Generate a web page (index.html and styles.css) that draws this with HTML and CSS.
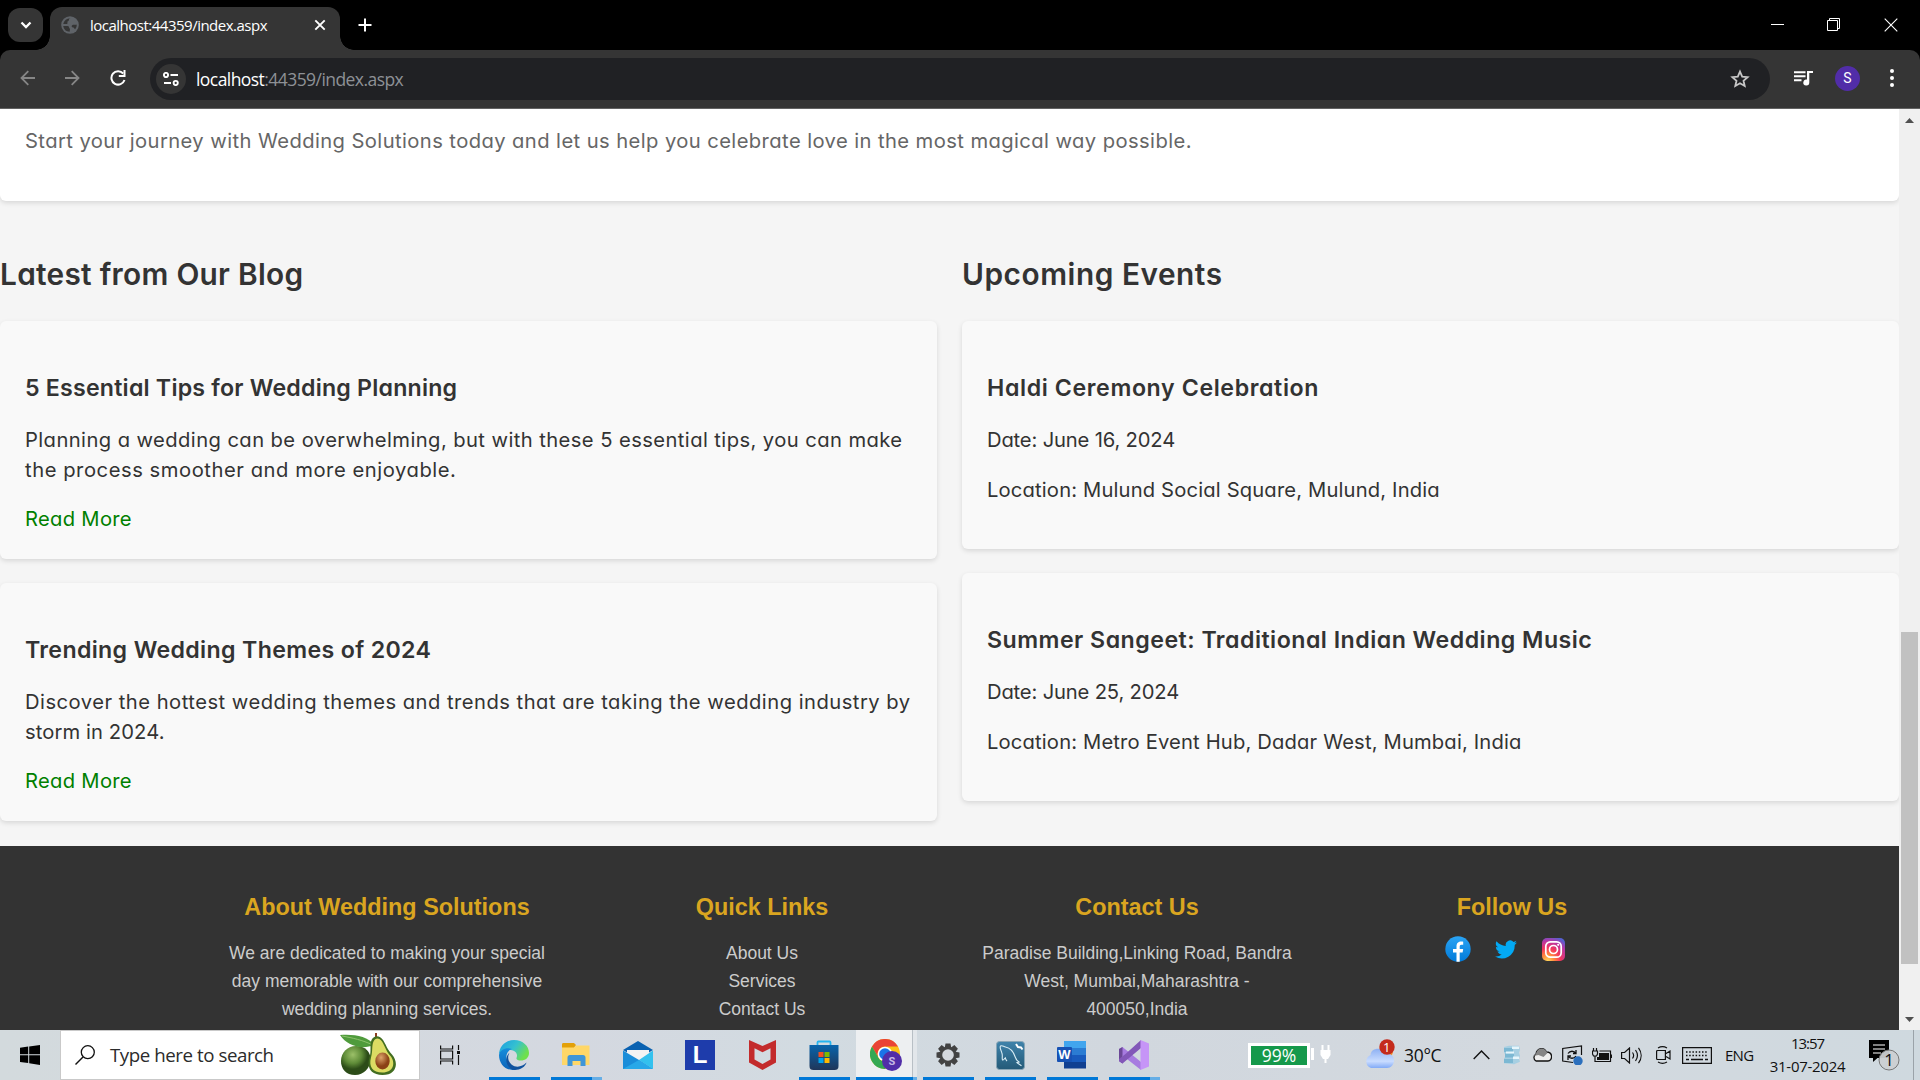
FILE: index.html
```html
<!DOCTYPE html>
<html lang="en">
<head>
<meta charset="utf-8">
<title>localhost:44359/index.aspx</title>
<link rel="stylesheet" href="styles.css">
</head>
<body>
<header class="browser">
  <div class="tabstrip">
    <button class="tab-search"><svg width="12" height="8" viewBox="0 0 12 8"><path d="M1.500 1.500 6 6l4.500-4.500" fill="none" stroke="#fff" stroke-width="2.300"/></svg></button>
    <div class="tab">
      <svg class="globe" width="18" height="18" viewBox="0 0 18 18"><circle cx="9" cy="9" r="8.800" fill="#5f6368"/><path d="M9.500 2.200C7 2.800 8.800 4.500 7 5.200 5.500 5.800 7.500 7.500 5.800 8H2.200a7 7 0 0 1 7.300-5.800zM2.200 10h4.300c1.800 0 1.200 1.500 2 2.200 1 .8.200 1.800.2 3.500A6.700 6.700 0 0 1 2.200 10zM15.800 8.500c-1.300 1-2.800-.5-4.300.5s-.8 2.500.7 2.500 1 1.800 2 1.800a7 7 0 0 0 1.600-4.800z" fill="#353535"/></svg>
      <span class="tab-title">localhost:44359/index.aspx</span>
      <svg width="12" height="12" viewBox="0 0 12 12"><path d="m1.300 1.300 9.400 9.400m0-9.400-9.400 9.400" stroke="#fff" stroke-width="1.900"/></svg>
    </div>
    <svg class="new-tab" width="14" height="14" viewBox="0 0 14 14"><path d="M7 .5v13M.5 7h13" stroke="#fff" stroke-width="2"/></svg>
    <div class="window-buttons">
      <svg width="13" height="14" viewBox="0 0 13 14"><path d="M0 6.500h13" stroke="#fff"/></svg>
      <svg width="13" height="14" viewBox="0 0 13 14"><path d="M.5 2.500h10v10H.5zM2.500 2.500v-2h10v10H11" fill="none" stroke="#fff"/></svg>
      <svg width="14" height="14" viewBox="0 0 14 14"><path d="m.7.700 12.600 12.600m0-12.600L.7 13.300" stroke="#fff" stroke-width="1.100"/></svg>
    </div>
  </div>
  <div class="toolbar">
    <svg width="15" height="16" viewBox="0 0 15 16"><path d="M15 8H1.500M8.300 1.200 1.500 8l6.800 6.800" fill="none" stroke="#868686" stroke-width="1.800"/></svg>
    <svg class="forward" width="15" height="16" viewBox="0 0 15 16"><path d="M0 8h13.500M6.700 1.200 13.500 8l-6.800 6.800" fill="none" stroke="#868686" stroke-width="1.800"/></svg>
    <svg class="reload" width="16" height="16" viewBox="0 0 16 16"><path d="M13.200 3.500A6.700 6.700 0 1 0 14.500 10" fill="none" stroke="#fff" stroke-width="2"/><path d="M15.500 0v7H8.800V5h4.700V0z" fill="#fff"/></svg>
    <div class="omnibox">
      <span class="site-info"><svg width="16" height="14" viewBox="0 0 16 14"><g fill="none" stroke="#fff" stroke-width="1.900"><circle cx="3" cy="3" r="2.100"/><path d="M7.500 3H15M1 11h7"/><circle cx="12.700" cy="11" r="2.100"/></g></svg></span>
      <span class="url"><b>localhost</b>:44359/index.aspx</span>
      <svg class="star" width="20" height="19" viewBox="0 0 20 19"><path d="m10 2.600 2.200 5 5.400.5-4.100 3.600 1.200 5.300-4.700-2.800L5.300 17l1.200-5.300-4.100-3.600 5.400-.5z" fill="none" stroke="#c7c7c7" stroke-width="1.800"/></svg>
    </div>
    <svg class="media" width="19" height="15" viewBox="0 0 19 15"><path d="M0 1.200h11.500M0 5.200h11.500M0 9.200h7.500" stroke="#fff" stroke-width="2"/><path d="M13 0h6v2h-3.700v9.500A3 3 0 1 1 13 8.600z" fill="#fff"/></svg>
    <span class="avatar">S</span>
    <svg class="menu" width="4" height="18" viewBox="0 0 4 18"><g fill="#fff"><circle cx="2" cy="2" r="2"/><circle cx="2" cy="9" r="2"/><circle cx="2" cy="16" r="2"/></g></svg>
  </div>
</header>

<div class="viewport">
  <main class="page">
    <section class="intro"><p>Start your journey with Wedding Solutions today and let us help you celebrate love in the most magical way possible.</p></section>
    <div class="columns">
      <section class="column">
        <h2 class="blog-heading">Latest from Our Blog</h2>
        <article class="card post">
          <h3 class="title-tips">5 Essential Tips for Wedding Planning</h3>
          <p class="wide">Planning a wedding can be overwhelming, but with these 5 essential tips, you can make<br><span class="wider">the process smoother and more enjoyable.</span></p>
          <a>Read More</a>
        </article>
        <article class="card post">
          <h3 class="title-themes">Trending Wedding Themes of 2024</h3>
          <p class="trend">Discover the hottest wedding themes and trends that are taking the wedding industry by<br><span class="narrow">storm in 2024.</span></p>
          <a>Read More</a>
        </article>
      </section>
      <section class="column">
        <h2 class="events-heading">Upcoming Events</h2>
        <article class="card">
          <h3 class="title-haldi">Haldi Ceremony Celebration</h3>
          <p class="date">Date: June 16, 2024</p>
          <p class="place">Location: Mulund Social Square, Mulund, India</p>
        </article>
        <article class="card">
          <h3 class="title-summer">Summer Sangeet: Traditional Indian Wedding Music</h3>
          <p class="date">Date: June 25, 2024</p>
          <p class="place">Location: Metro Event Hub, Dadar West, Mumbai, India</p>
        </article>
      </section>
    </div>
    <footer class="footer">
      <div><h4>About Wedding Solutions</h4><p>We are dedicated to making your special<br>day memorable with our comprehensive<br>wedding planning services.</p></div>
      <div><h4>Quick Links</h4><p>About Us<br>Services<br>Contact Us</p></div>
      <div><h4>Contact Us</h4><p>Paradise Building,Linking Road, Bandra<br>West, Mumbai,Maharashtra -<br>400050,India</p></div>
      <div><h4>Follow Us</h4>
        <div class="social">
          <svg width="26" height="26" viewBox="0 0 26 26"><defs><linearGradient id="fb" x2="0" y2="1"><stop stop-color="#2aa4f4"/><stop offset="1" stop-color="#007ad9"/></linearGradient></defs><circle cx="13" cy="13" r="12.700" fill="url(#fb)"/><path d="M11.500 25.700V16.500H8V13h3.500v-2.500c0-3.600 2-5 4.700-5 1 0 2 .2 2 .2v3h-1.700c-1.400 0-1.800.9-1.800 1.800V13h3.500l-.6 3.500h-2.900v9.200z" fill="#fff"/></svg>
          <svg width="22" height="19" viewBox="0 0 24 20"><path d="M24 2.400a10 10 0 0 1-2.800.8A5 5 0 0 0 23.300.5a10 10 0 0 1-3.100 1.200A4.900 4.900 0 0 0 11.800 6.200 14 14 0 0 1 1.700 1.100a4.900 4.900 0 0 0 1.500 6.500A4.900 4.900 0 0 1 1 7a4.900 4.900 0 0 0 3.900 4.900 5 5 0 0 1-2.200.1 4.900 4.900 0 0 0 4.600 3.400A9.900 9.900 0 0 1 0 17.500a14 14 0 0 0 21.500-12.500A10 10 0 0 0 24 2.400z" fill="#03a9f4"/></svg>
          <svg width="23" height="23" viewBox="0 0 23 23"><defs><radialGradient id="ig" cx=".25" cy="1" r="1.100"><stop stop-color="#ffd75a"/><stop offset=".25" stop-color="#ff8a3d"/><stop offset=".5" stop-color="#f5375c"/><stop offset=".8" stop-color="#b637a6"/><stop offset="1" stop-color="#5660d0"/></radialGradient></defs><rect width="23" height="23" rx="5" fill="url(#ig)"/><g fill="none" stroke="#fff" stroke-width="1.700"><rect x="3.800" y="3.800" width="15.400" height="15.400" rx="4.500"/><circle cx="11.500" cy="11.500" r="4"/></g><circle cx="16.200" cy="6.800" r="1.100" fill="#fff"/></svg>
        </div>
      </div>
    </footer>
  </main>
  <div class="scrollbar">
    <svg width="9" height="5" viewBox="0 0 9 5"><path d="M0 5 4.500 0 9 5z" fill="#505050"/></svg>
    <div class="thumb"></div>
    <svg width="9" height="5" viewBox="0 0 9 5"><path d="M0 0 4.500 5 9 0z" fill="#505050"/></svg>
  </div>
</div>

<nav class="taskbar">
  <div class="start"><svg width="20" height="20" viewBox="0 0 20 20"><path d="M0 2.800 8.200 1.600v7.700H0zM9.200 1.500 20 0v9.300H9.200zM0 10.300h8.200V18L0 16.900zM9.200 10.300H20V20L9.200 18.200z"/></svg></div>
  <div class="search">
    <svg width="20" height="20" viewBox="0 0 20 20"><circle cx="12.800" cy="7.200" r="6.500" fill="none" stroke="#111" stroke-width="1.300"/><path d="m8 12-7.500 7.500" stroke="#111" stroke-width="1.400"/></svg>
    <span>Type here to search</span>
    <svg class="avocado" width="58" height="44" viewBox="0 0 58 44"><defs><radialGradient id="av" cx=".4" cy=".3"><stop stop-color="#9cc069"/><stop offset=".6" stop-color="#5f8c38"/><stop offset="1" stop-color="#2c4c18"/></radialGradient><radialGradient id="pit" cx=".4" cy=".3"><stop stop-color="#dda36a"/><stop offset="1" stop-color="#8b4216"/></radialGradient></defs><path d="M16 13c9 0 15 6 14.500 14S24 42 15 42 1 36 1 28s6-15 15-15z" fill="url(#av)"/><path d="M0 2c14-1 28 1 34 10C22 17 7 13 0 2z" fill="#4f9b3c"/><path d="M2 3c11 2 20 4 31 9" stroke="#8dc36c" fill="none"/><path d="M36 0v5" stroke="#8a3d1e" stroke-width="2"/><path d="M31.500 7c3-5.500 8.500-4.500 11.500 0s4 9 9 14.500c7 8 5 20.500-9.500 20.500-12 0-16-8-13-17.500 2-7 0-12 2-17.500z" fill="#426d20"/><path d="M33.500 8.500c2-4.500 6-3.500 8.500 0 3.500 5.500 4 9.500 8.500 14.500 5.500 7 3 16.500-8 16.500-10 0-14-6-11.500-15 2-7 .5-11.500 2.500-16z" fill="#dcdc63"/><ellipse cx="42.500" cy="28" rx="7.200" ry="8.500" fill="url(#pit)"/></svg>
  </div>
  <div class="task-view"><svg width="20" height="20" viewBox="0 0 20 20"><path d="M.6.500v3.500h12V.5M.6 19.500V16h12v3.500M.6 6h12v8H.6zM18.500 0v5M18.500 10v10" fill="none" stroke="#111" stroke-width="1.200"/><path d="M17 6h3v3h-3z" fill="#111"/></svg></div>
  <div class="apps">
    <div class="app running"><svg width="30" height="30" viewBox="0 0 30 30"><defs><linearGradient id="e1" x1="0" x2="1" y2=".5"><stop stop-color="#1b9de2"/><stop offset=".55" stop-color="#35c1d0"/><stop offset="1" stop-color="#6fe04c"/></linearGradient><linearGradient id="e2" x2="0" y2="1"><stop stop-color="#168ddb"/><stop offset="1" stop-color="#0b63b9"/></linearGradient></defs><path d="M0 15C0 6 7 0 15 0c9 0 15 6 15 13 0 5-4 7.500-8 7.500-3 0-5-1-4.500-2.500 1-2 1-6-3.500-7.500C8 8.500 1 11 0 15z" fill="url(#e1)"/><path d="M0 15c1-6 8-8 13-6-4 1-7 6-5 11 2 6 6 8.500 10 9.500C8 32 0 25 0 15z" fill="url(#e2)"/><path d="M10.500 13c-2 3-2 8 2 11.500 5 4 11 2 15-2-1 4-6 7.500-12 7.500-6-1-9-7-8-12 .5-2.500 1.500-4 3-5z" fill="#10529e"/></svg></div>
    <div class="app running extra"><svg width="28" height="24" viewBox="0 0 28 24"><path d="M0 1.500C0 .5.500 0 1.500 0H12l2 2-2 3H0z" fill="#e3a008"/><path d="M0 4.500h12l2-2h13.500V22H0z" fill="#ffd768"/><path d="M5.500 23v-8.500c0-1.500 1-2.500 2.500-2.500h13c1.500 0 2.500 1 2.500 2.500V23h-5v-5h-8v5z" fill="#3f96d8"/></svg></div>
    <div class="app"><svg width="30" height="28" viewBox="0 0 30 28"><path d="M0 9 15 0l15 9-15 9z" fill="#0961b1"/><path d="M4 9h22v6l-11 6L4 15z" fill="#f3f3f3"/><path d="M0 9.500 16 19 30 28H0z" fill="#1a8dd9"/><path d="m16 19 14-9.500V28z" fill="#33c1ee"/><path d="M0 28h30L16 19z" fill="#28a8e8"/></svg></div>
    <div class="app"><span class="lenovo">L</span></div>
    <div class="app"><svg width="27" height="30" viewBox="0 0 27 30"><path d="m0 0 13.500 6L27 0v22.500L13.500 30 0 22.500zm5.500 8.300v11.200l8 4.500 8-4.500V8.300l-8 4z" fill="#c32b2c" fill-rule="evenodd"/></svg></div>
    <div class="app running"><svg width="30" height="30" viewBox="0 0 30 30"><defs><linearGradient id="st" x2="0" y2="1"><stop stop-color="#0864ab"/><stop offset="1" stop-color="#203659"/></linearGradient></defs><path d="M8.500 7V2.500C8.500 2 8.800 1.500 9.500 1.500h11c.7 0 1 .5 1 1V7" fill="none" stroke="#25b4ef" stroke-width="1.800"/><path d="M.500 5h29v21c0 3-1.500 4-4 4h-21c-2.500 0-4-1-4-4z" fill="url(#st)"/><path d="M9.500 12h5v5h-5z" fill="#f25022"/><path d="M15.500 12h5v5h-5z" fill="#7fba00"/><path d="M9.500 18h5v5h-5z" fill="#00a4ef"/><path d="M15.500 18h5v5h-5z" fill="#ffb900"/></svg></div>
    <div class="app running chrome"><svg width="32" height="32" viewBox="0 0 32 32"><circle cx="15" cy="15" r="15" fill="#fbc116"/><path d="M2 7.500A15 15 0 0 1 28 7.500H15A7.500 7.500 0 0 0 8.500 18.700z" fill="#ea4335"/><path d="M2 7.500 8.500 18.700A7.500 7.500 0 0 0 21.500 18.700L15 30A15 15 0 0 1 2 7.500z" fill="#34a853"/><circle cx="15" cy="15" r="7.300" fill="#fff"/><circle cx="15" cy="15" r="5.800" fill="#1a73e8"/><circle cx="22" cy="22" r="10" fill="#512da8"/><text x="22" y="26" text-anchor="middle" class="badge-letter">S</text></svg></div>
    <div class="app running"><svg width="24" height="24" viewBox="-12 -12 24 24"><g fill="#424242"><circle r="8.500"/><g id="tooth"><path d="M-2.500-11.500h5l.7 4h-6.400zM-2.500 11.500h5l.7-4h-6.400z"/></g><use href="#tooth" transform="rotate(45)"/><use href="#tooth" transform="rotate(90)"/><use href="#tooth" transform="rotate(135)"/></g><circle r="5.800" fill="#d4d8dd"/></svg></div>
    <div class="app running"><svg width="29" height="29" viewBox="0 0 29 29"><defs><linearGradient id="my" x2="0" y2="1"><stop stop-color="#3f83ab"/><stop offset="1" stop-color="#245a78"/></linearGradient></defs><rect x=".5" y=".5" width="28" height="28" rx="3" fill="url(#my)" stroke="#8aa6b6"/><path d="M11 20c-1-1-1.500-2-1.700-3.200C8 18 7.500 19.500 6.500 19c-.8-2 .4-4-.6-7C5 9 3.300 7 4.500 5c2-1 3 .7 5 1 5 1 8 5 9.500 9.500.7 2.500 2 4 4 5.500l-2 .7 4.500 3" fill="none" stroke="#d9edf5" stroke-width="1.100"/><path d="m20 3 2 3 3 .5 1.500 2" fill="none" stroke="#fff" stroke-width="2"/></svg></div>
    <div class="app running"><svg width="30" height="28" viewBox="0 0 30 28"><path d="M7 0h22v7H7z" fill="#41a5ee"/><path d="M7 7h22v7H7z" fill="#2b7cd3"/><path d="M7 14h22v7H7z" fill="#185abd"/><path d="M7 21h22v6.500H7z" fill="#103f91"/><rect y="6" width="15" height="15" rx="1" fill="#1752b4"/><text x="7.500" y="18" text-anchor="middle" class="word-letter">W</text></svg></div>
    <div class="app running extra"><svg width="30" height="30" viewBox="0 0 30 30"><path d="m0 9 3.500-2L22 22v8L3.500 15.500v8L0 21z" fill="#a77be0"/><path d="m0 9 3.500-2v16.500L0 21z" fill="#6b4796"/><path d="M3.500 23.500 22 8V0L6.500 14 0 19v2z" fill="#8257b8"/><path d="m21.500 0 8.500 3.500v23L21.500 30z" fill="#c695f7"/></svg></div>
  </div>
  <div class="tray">
    <div class="battery">99%</div>
    <svg class="plug" width="20" height="30" viewBox="0 0 20 30"><path d="M0 8h3v12H0z" fill="#fff"/><path d="M11.500 5v6M17.500 5v6M14.500 15v8" stroke="#fff" stroke-width="2"/><path d="M9.500 10h10v5l-2.500 4h-5l-2.500-4z" fill="#fff"/></svg>
    <svg class="weather" width="31" height="32" viewBox="0 0 31 32"><defs><linearGradient id="wc" x2="0" y2="1"><stop stop-color="#8eb1f3"/><stop offset=".65" stop-color="#c9dcff"/><stop offset="1" stop-color="#82aaf7"/></linearGradient></defs><circle cx="22" cy="13" r="7" fill="#f58b1e"/><path d="M7 30a7 7 0 0 1-.5-13C7 9 20 9 21.500 16c5-2 9 3 8.500 7s-3 7-7 7z" fill="url(#wc)"/><circle cx="23" cy="9" r="7.700" fill="#c42b1c"/><text x="22.800" y="13.500" text-anchor="middle" class="alert-count">1</text></svg>
    <span class="temp">30°C</span>
    <svg class="chevron" width="17" height="10" viewBox="0 0 17 10"><path d="m.7 9 7.800-8 7.800 8" fill="none" stroke="#111" stroke-width="1.400"/></svg>
    <svg class="ice" width="18" height="20" viewBox="0 0 18 20"><path d="M1 2 6 .8h10l1 4-1 3 1 3-1 3 1 3-6 2.500-10-1v-5l2-2-2-4z" fill="#a6cfe2"/><path d="M1 3h9v4H1zM2 8.500h9v4H2zM1 14h9v4H1z" fill="#7cb8d3"/><path d="M9 1.500h7v2.500H9zM3 6.500h8v2H3zM10 11.500h6V14h-6z" fill="#e6f5fb"/></svg>
    <svg class="cloud" width="20" height="15" viewBox="0 0 20 15"><path d="M4 14a4 4 0 0 1 0-7C5 1 12-.5 14.500 5c7 0 6 9 1.500 9z" fill="#eee" stroke="#111" stroke-width="1.300"/><path d="m1.500 9 5-1 5 2 4-4C12-1 5 1 4 7z" fill="#858585"/></svg>
    <svg class="sync" width="22" height="20" viewBox="0 0 22 20"><path d="M11 17.500.700 16V3.500L19.500 1v9" fill="none" stroke="#111" stroke-width="1.200"/><path d="M6 8.500c2-3 6-3 8 0M14 5v3.500h-3M14 11c-2 3-6 3-8 0M6 15v-4h3" fill="none" stroke="#111" stroke-width="1.300"/><circle cx="16" cy="16" r="4.700" fill="#2b6fbd"/></svg>
    <svg class="power" width="20" height="14" viewBox="0 0 20 14"><path d="M1.500 0v3M4.500 0v3M.5 3h5v3l-1 2h-3l-1-2zM3 8v5.500h15.500V3H7.500M19.500 6.500v3.500" fill="none" stroke="#111" stroke-width="1.200"/><path d="M7 5h10v7H5V9h2z" fill="#111"/></svg>
    <svg class="sound" width="21" height="17" viewBox="0 0 21 17"><path d="M.600 5.500h3L8.500 1v15l-4.900-4.500h-3zM11.500 5.500c1.500 2 1.500 4 0 6M14.500 3c2.500 3.500 2.500 7.500 0 11M17.500.8c3.500 4.700 3.500 10.700 0 15.400" fill="none" stroke="#111" stroke-width="1.200"/></svg>
    <svg class="camera" width="15" height="18" viewBox="0 0 15 18"><path d="M2 2c3-1.700 6-1.700 9 0M2 16c3 1.700 6 1.700 9 0M1.600 4.500h7.800v9H1.600A1 1 0 0 1 .6 12.500v-7a1 1 0 0 1 1-1zM10 7.500l4-2.500v8l-4-2.500" fill="none" stroke="#111" stroke-width="1.200"/></svg>
    <svg class="keyboard" width="30" height="17" viewBox="0 0 30 17"><path d="M.600.600h28.800v15.800H.600z" fill="none" stroke="#111" stroke-width="1.200"/><path d="M4 5h22M4 8.500h22" stroke="#111" stroke-width="1.400" stroke-dasharray="1.500 1.700"/><path d="M4 12.500h3m2 0h12m2 0h3" stroke="#111" stroke-width="1.400"/></svg>
    <span class="lang">ENG</span>
    <div class="clock"><span>13:57</span><span class="day">31-07-2024</span></div>
    <svg class="notice" width="31" height="31" viewBox="0 0 31 31"><path d="M0 0h20v18H8.500L4 22v-4H0z" fill="#000"/><path d="M4 5h12M4 9h12M4 13h8" stroke="#fff" stroke-width="1.200"/><circle cx="20" cy="20" r="10" fill="#cccfd2" fill-opacity=".94" stroke="#777"/><text x="20" y="26" text-anchor="middle" class="notice-count">1</text></svg>
    <span class="peek"></span>
  </div>
</nav>
</body>
</html>
```
FILE: styles.css
```css
* { box-sizing: border-box; }
body { margin: 0; width: 1920px; height: 1080px; overflow: hidden; display: flex; flex-direction: column; font-family: "Open Sans", sans-serif; }
h2, h3, h4, p { margin: 0; }
svg { display: block; flex: none; }

/* Browser frame */
.browser { height: 109px; flex: none; background: #000; color: #fff; }
.tabstrip { height: 50px; display: flex; align-items: flex-start; padding-left: 8px; }
.tab-search { width: 35px; height: 34px; margin: 8px 7px 0 0; padding: 0; border: 0; border-radius: 12px; background: #353535; display: grid; place-items: center; }
.tab { position: relative; width: 290px; height: 43px; margin-top: 7px; padding: 0 14px 7px 11px; border-radius: 12px 12px 0 0; background: #353535; display: flex; align-items: center; }
.tab::before, .tab::after { content: ""; position: absolute; bottom: 0; width: 14px; height: 14px; }
.tab::before { left: -14px; background: radial-gradient(circle at 0 0, transparent 13.5px, #353535 14px); }
.tab::after { right: -14px; background: radial-gradient(circle at 100% 0, transparent 13.5px, #353535 14px); }
.tab-title { flex: 1; margin-left: 11px; font-size: 15px; letter-spacing: -.502px; }
.new-tab { margin: 18px 0 0 18px; }
.window-buttons { margin: 18px 22px 0 auto; display: flex; gap: 43px; }
.window-buttons svg:last-child { margin-left: 1px; }
.toolbar { height: 59px; padding: 0 26px 1px 20px; display: flex; align-items: center; background: #353535; border-bottom: 1px solid #626262; border-radius: 10px 10px 0 0; }
.toolbar > svg { margin-top: -1px; }
.forward { margin-left: 30px; }
.reload { margin-left: 30px; }
.omnibox { width: 1620px; height: 42px; margin-left: 24px; padding: 0 20px 0 6px; border-radius: 21px; background: #202124; display: flex; align-items: center; }
.site-info { width: 30px; height: 30px; border-radius: 50%; background: #353535; display: grid; place-items: center; }
.url { flex: 1; margin-left: 10px; font-size: 17.5px; letter-spacing: -.56px; color: #8e9196; }
.url b { font-weight: 400; color: #fff; }
.toolbar > .media { margin: -1px 0 0 24px; }
.avatar { width: 25px; height: 25px; margin: -1px 0 0 22px; border-radius: 50%; background: #512da8; font: 14px/25px Roboto, sans-serif; text-align: center; }
.menu { margin-left: auto; }

/* Page */
.viewport { height: 921px; flex: none; display: flex; }
.page { width: 1899px; height: 921px; overflow: hidden; background: #f5f5f5; color: #333; font: 400 20.2px/30px Inter, sans-serif; font-feature-settings: "cv11"; white-space: nowrap; }
.intro { height: 92px; padding: 17px 25px; border-radius: 0 0 6px 6px; background: #fff; color: #666; letter-spacing: .414px; box-shadow: 0 2px 5px rgba(0, 0, 0, .12); }
.columns { display: grid; grid-template-columns: 937px 937px; column-gap: 25px; height: 645px; padding-top: 51px; }
.column { display: flex; flex-direction: column; gap: 24px; }
.column h2 { font-size: 29.8px; line-height: 45px; font-weight: 600; }
.blog-heading { letter-spacing: .29px; }
.events-heading { letter-spacing: .54px; }
.card { height: 228px; flex: none; padding: 51px 25px 24px; border-radius: 6px; background: #f9f9f9; box-shadow: 0 2px 5px rgba(0, 0, 0, .12); }
.post { height: 238px; }
.card h3 { margin-bottom: 21px; font-size: 23.2px; line-height: 32px; font-weight: 600; }
.card p + p { margin-top: 20px; }
.card a { display: block; margin-top: 19px; color: green; letter-spacing: .3px; }
.title-tips { letter-spacing: .2px; }
.title-themes { letter-spacing: .33px; }
.title-haldi { letter-spacing: .6px; }
.title-summer { letter-spacing: .47px; }
.wide { letter-spacing: .42px; }
.wider { letter-spacing: .55px; }
.trend { letter-spacing: .485px; }
.narrow { letter-spacing: .1px; }
.date { letter-spacing: -.16px; }
.place { letter-spacing: .16px; }
.footer { height: 184px; padding: 46px 0 0 199.5px; display: grid; grid-template-columns: repeat(4, 375px); background: #333; color: #ccc; text-align: center; font: 17.5px/28px "Liberation Sans", sans-serif; }
.footer h4 { margin-bottom: 17px; color: #daa520; font-size: 23.4px; line-height: 30px; }
.social { margin-top: -3px; padding-left: 120.5px; display: flex; align-items: center; gap: 25px; }
.social svg:nth-child(2) { margin-left: -1px; }
.scrollbar { width: 21px; background: #f0f0f0; display: flex; flex-direction: column; align-items: center; padding: 9px 0 8px; }
.thumb { width: 17px; height: 332px; margin: 509px 0 auto; background: #c1c1c1; }

/* Taskbar */
.taskbar { height: 50px; flex: none; display: flex; background: linear-gradient(90deg, #d3dadd, #d4d8e0 30%, #d2dbe1 42%, #d1d7de 58%, #d3d9df 80%, #cfd9df); color: #111; white-space: nowrap; }
.start { width: 60px; padding: 15px 20px; }
.search { width: 360px; border: 1px solid #c9c9c9; background: #fff; display: flex; align-items: center; padding-left: 14px; font-size: 18.7px; letter-spacing: -.44px; color: #2b2b2b; }
.search span { width: 163px; margin: -2px 67px 0 15px; }
.task-view { width: 63px; padding: 15px 20px; }
.apps { display: flex; }
.app { position: relative; width: 62px; height: 50px; display: grid; place-items: center; }
.app.running::after { content: ""; position: absolute; left: 6px; bottom: 0; width: 51px; height: 3px; background: #0078d7; }
.app.extra::after { background: linear-gradient(90deg, #0078d7 41px, #66aee6 41px); }
.app.chrome { background: linear-gradient(90deg, transparent 1px, #edeff1 1px 57px, #b8bfc5 57px 58px, #e2e6ea 58px); }
.app.chrome::after { left: 1px; width: 61px; background: linear-gradient(90deg, #0078d7 57px, #66aee6 57px); }
.lenovo { width: 30px; height: 30px; background: #1e3cab; color: #fff; font: 700 24px/29px "Liberation Sans", sans-serif; text-align: center; }
.badge-letter { font: 700 11px Roboto, sans-serif; fill: #c6b9e4; }
.word-letter { font: 700 13px "Liberation Sans", sans-serif; fill: #fff; }
.tray { flex: 1; display: flex; align-items: center; padding-left: 83px; }
.battery { width: 62px; height: 25px; border: 3px solid #fff; background: #15994b; color: #fff; font-size: 17.5px; line-height: 18px; text-align: center; }
.plug { margin-left: 1px; }
.weather { margin: -2px 0 0 33px; }
.alert-count { font: 13px "Open Sans", sans-serif; fill: #fff; }
.temp { width: 38px; margin: -1px 0 0 9px; font-size: 17.5px; letter-spacing: -.3px; }
.chevron { margin-left: 31px; }
.ice { margin-left: 13px; }
.cloud { margin: -2px 0 0 11px; }
.sync { margin-left: 10px; }
.power { margin-left: 8px; }
.sound { margin-left: 9px; }
.camera { margin-left: 14px; }
.keyboard { margin-left: 11px; }
.lang { width: 28px; margin-left: 13px; font-size: 15px; letter-spacing: -.75px; }
.clock { width: 77px; margin-left: 16px; display: flex; flex-direction: column; align-items: center; font-size: 15px; line-height: 23px; letter-spacing: -1px; }
.clock .day { letter-spacing: -.278px; }
.notice { margin: 1px 0 0 23px; }
.notice-count { font: 17px "Open Sans", sans-serif; fill: #111; }
.peek { width: 1px; height: 50px; margin-left: 13px; background: #9ba3a9; }
```
